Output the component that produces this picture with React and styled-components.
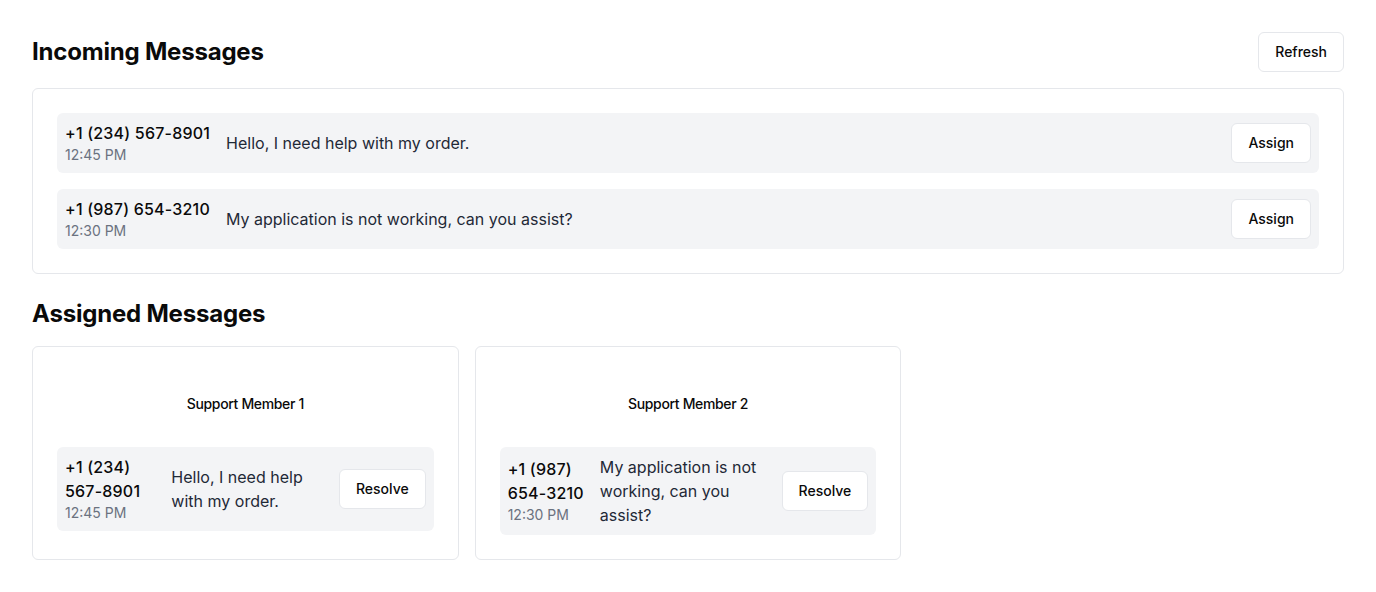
import React from 'react';
import styled, { createGlobalStyle } from 'styled-components';

const GlobalStyle = createGlobalStyle`
  * { box-sizing: border-box; }
  body {
    margin: 0;
    background: #ffffff;
    color: #0a0a0a;
    font-family: Inter, "Noto Sans", sans-serif;
  }
`;

const Page = styled.div`
  padding: 32px;
  display: flex;
  flex-direction: column;
`;

const Header = styled.div`
  display: flex;
  align-items: center;
  justify-content: space-between;
  margin-bottom: 16px;
`;

const Title = styled.h2`
  margin: 0;
  font-size: 24px;
  line-height: 32px;
  font-weight: 700;
  letter-spacing: -0.2px;
  ${p => p.spaced && 'margin: 24px 0 16px;'}
`;

const Button = styled.button`
  display: inline-flex;
  align-items: center;
  justify-content: center;
  height: 40px;
  padding: 0 16px 1px;
  background: #fff;
  border: 1px solid #e5e7eb;
  border-radius: 6px;
  font-family: inherit;
  font-size: 14px;
  line-height: 20px;
  font-weight: 500;
  color: #0a0a0a;
  flex-shrink: 0;
  cursor: pointer;
`;

const Card = styled.div`
  border: 1px solid #e5e7eb;
  border-radius: 6px;
  background: #fff;
  padding: 24px;
  display: flex;
  flex-direction: column;
  gap: 16px;
`;

const Grid = styled.div`
  display: grid;
  grid-template-columns: repeat(3, 1fr);
  gap: 16px;
`;

const MemberCard = styled.div`
  border: 1px solid #e5e7eb;
  border-radius: 6px;
  background: #fff;
  padding: 0 24px 24px;
`;

const MemberName = styled.h3`
  margin: 0;
  padding: 47px 0 33px;
  text-align: center;
  font-size: 14px;
  line-height: 20px;
  font-weight: 500;
  letter-spacing: -0.35px;
`;

const Row = styled.div`
  display: flex;
  align-items: center;
  justify-content: space-between;
  gap: 16px;
  padding: 8px;
  background: #f3f4f6;
  border-radius: 6px;
`;

const Info = styled.div`
  display: flex;
  align-items: center;
  gap: 16px;
`;

const Sender = styled.div`
  display: flex;
  flex-direction: column;
`;

const Phone = styled.span`
  font-size: 16px;
  line-height: 24px;
  font-weight: 500;
  letter-spacing: 0.2px;
`;

const Chunk = styled.span`
  white-space: nowrap;
`;

const Time = styled.span`
  font-size: 14px;
  line-height: 20px;
  color: #6b7280;
`;

const Text = styled.p`
  margin: 0;
  font-size: 16px;
  line-height: 24px;
  color: #1f2937;
`;

const incoming = [
  { code: '+1 (234)', number: '567-8901', time: '12:45 PM', text: 'Hello, I need help with my order.' },
  { code: '+1 (987)', number: '654-3210', time: '12:30 PM', text: 'My application is not working, can you assist?' },
];

const Message = ({ msg, action }) => (
  <Row>
    <Info>
      <Sender>
        <Phone>
          <Chunk>{msg.code}</Chunk> <Chunk>{msg.number}</Chunk>
        </Phone>
        <Time>{msg.time}</Time>
      </Sender>
      <Text>{msg.text}</Text>
    </Info>
    <Button>{action}</Button>
  </Row>
);

export default function App() {
  return (
    <Page>
      <GlobalStyle />
      <Header>
        <Title>Incoming Messages</Title>
        <Button>Refresh</Button>
      </Header>
      <Card>
        {incoming.map(m => <Message key={m.number} msg={m} action="Assign" />)}
      </Card>

      <Title spaced>Assigned Messages</Title>
      <Grid>
        {incoming.map((m, i) => (
          <MemberCard key={m.number}>
            <MemberName>Support Member {i + 1}</MemberName>
            <Message msg={m} action="Resolve" />
          </MemberCard>
        ))}
      </Grid>
    </Page>
  );
}
